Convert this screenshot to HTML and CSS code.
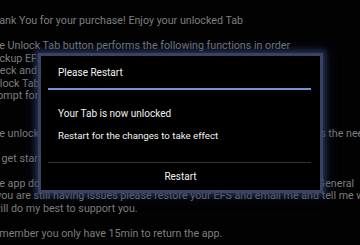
FILE: index.html
```html
<!DOCTYPE html>
<html>
<head>
<meta charset="utf-8">
<link rel="stylesheet" href="styles.css">
</head>
<body>
<div class="screen">
  <div class="bg-text">
    <p class="ln">Thank You for your purchase! Enjoy your unlocked Tab</p>
    <p class="ln"></p>
    <p class="ln">The Unlock Tab button performs the following functions in order</p>
    <p class="ln">Backup EFS to your sdcard</p>
    <p class="ln">Check and patch the files</p>
    <p class="ln">Unlock Tab and save changes</p>
    <p class="ln">Prompt for a restart</p>
    <p class="ln"></p>
    <p class="ln"></p>
    <p class="ln">The unlock button will back up your EFS first and then, it simply patches the needed files.</p>
    <p class="ln"></p>
    <p class="ln">To get started press Unlock Tab</p>
    <p class="ln"></p>
    <p class="ln">The app does not need to be kept after unlocking, go to the Settings &gt; General</p>
    <p class="ln">If you are still having issues please restore your EFS and email me and tell me what happened</p>
    <p class="ln">I will do my best to support you.</p>
    <p class="ln"></p>
    <p class="ln">Remember you only have 15min to return the app.</p>
  </div>
  <div class="dialog">
    <div class="dlg-title">Please Restart</div>
    <div class="dlg-rule"></div>
    <div class="dlg-body">
      <p class="dlg-msg">Your Tab is now unlocked</p>
      <p class="dlg-msg second">Restart for the changes to take effect</p>
    </div>
    <div class="dlg-divider"></div>
    <div class="dlg-button">Restart</div>
  </div>
</div>
</body>
</html>
```

FILE: styles.css
```css
html, body {
  margin: 0;
  padding: 0;
  background: #000;
}
.screen {
  position: relative;
  width: 360px;
  height: 245px;
  overflow: hidden;
  background: #020203;
  font-family: Roboto, "Noto Sans", sans-serif;
}
.bg-text {
  margin-left: -13px;
  padding-top: 15px;
  color: #7e7e7e;
  font-size: 10.7px;
  white-space: nowrap;
}
.ln {
  margin: 0;
  height: 12.5px;
  line-height: 12.5px;
}
.dialog {
  position: absolute;
  left: 41px;
  top: 56px;
  width: 279px;
  height: 134px;
  background: #000;
  display: flex;
  flex-direction: column;
  box-shadow:
    0 0 0 3px rgba(62, 74, 108, 0.8),
    0 0 5px 6px rgba(52, 64, 102, 0.6),
    0 0 12px 8px rgba(40, 55, 100, 0.3);
}
.dlg-title {
  height: 32px;
  padding-left: 17px;
  display: flex;
  align-items: center;
  color: #f2f2f2;
  font-size: 10px;
}
.dlg-rule {
  height: 2px;
  margin: 0 9px 0 7px;
  background: #7592dc;
}
.dlg-body {
  padding: 18px 17px 0;
  height: 54px;
}
.dlg-msg {
  margin: 0;
  color: #f2f2f2;
  font-size: 10px;
  line-height: 12px;
}
.dlg-msg.second {
  margin-top: 10px;
  font-size: 9.7px;
}
.dlg-divider {
  height: 1px;
  margin: 0 9px 0 7px;
  background: #333;
}
.dlg-button {
  flex: 1;
  display: flex;
  align-items: center;
  justify-content: center;
  color: #f2f2f2;
  font-size: 10px;
}
```
